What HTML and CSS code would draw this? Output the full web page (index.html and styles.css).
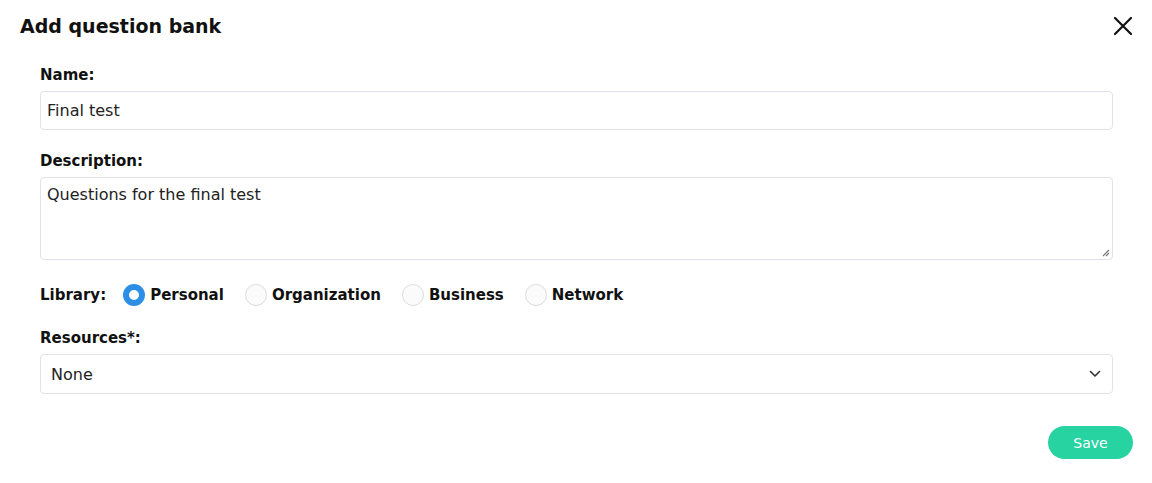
FILE: index.html
```html
<!DOCTYPE html>
<html lang="en">
<head>
<meta charset="utf-8">
<title>Add question bank</title>
<link rel="stylesheet" href="styles.css">
</head>
<body>
<div class="modal">
  <div class="modal-header">
    <h1 class="modal-title">Add question bank</h1>
    <button class="close-btn" aria-label="Close">
      <svg width="20" height="20" viewBox="0 0 20 20"><path d="M2 2 L18 18 M18 2 L2 18" stroke="#111" stroke-width="2.2" stroke-linecap="round" fill="none"/></svg>
    </button>
  </div>
  <form class="modal-body">
    <div class="field">
      <label class="label">Name:</label>
      <div class="input">Final test</div>
    </div>
    <div class="field">
      <label class="label">Description:</label>
      <div class="textarea">Questions for the final test
        <svg class="grip" width="9" height="9" viewBox="0 0 9 9"><path d="M8 2 L2 8 M8 5 L5 8" stroke="#777" stroke-width="1.2" fill="none"/></svg>
      </div>
    </div>
    <div class="library-row">
      <span class="label-inline">Library:</span>
      <span class="radio-opt"><span class="radio checked"></span>Personal</span>
      <span class="radio-opt"><span class="radio"></span>Organization</span>
      <span class="radio-opt"><span class="radio"></span>Business</span>
      <span class="radio-opt"><span class="radio"></span>Network</span>
    </div>
    <div class="field">
      <label class="label">Resources*:</label>
      <div class="select">None
        <svg class="chev" width="12" height="8" viewBox="0 0 12 8"><path d="M1.5 1.5 L6 6 L10.5 1.5" stroke="#333" stroke-width="1.6" fill="none" stroke-linecap="round" stroke-linejoin="round"/></svg>
      </div>
    </div>
  </form>
  <div class="modal-footer">
    <button class="save-btn">Save</button>
  </div>
</div>
</body>
</html>
```
FILE: styles.css
```css
* { box-sizing: border-box; }
html, body { margin: 0; padding: 0; background: #fff; }
body {
  font-family: "DejaVu Sans", "Open Sans", sans-serif;
  color: #222;
  width: 1152px;
  height: 483px;
  overflow: hidden;
}
.modal { width: 1152px; }
.modal-header {
  display: flex;
  justify-content: space-between;
  align-items: center;
  padding: 13px 19px 0 20px;
  height: 39px;
}
.modal-title {
  margin: 0;
  font-size: 19px;
  line-height: 26px;
  font-weight: 700;
  color: #111;
}
.close-btn {
  border: 0;
  background: none;
  padding: 0;
  width: 20px;
  height: 20px;
  display: flex;
  cursor: pointer;
}
.modal-body {
  padding: 26px 39px 0 40px;
  display: flex;
  flex-direction: column;
}
.field { display: flex; flex-direction: column; }
.field + .field { margin-top: 21px; }
.label, .label-inline {
  font-size: 15px;
  line-height: 20px;
  font-weight: 700;
  color: #111;
}
.label { margin-bottom: 6px; }
.input, .select, .textarea {
  border: 1px solid #e2e2ea;
  border-radius: 4px;
  font-size: 16px;
  color: #222;
  background: #fff;
}
.input {
  height: 39px;
  padding: 0 6px;
  display: flex;
  align-items: center;
}
.textarea {
  height: 83px;
  padding: 6px 6px;
  line-height: 22px;
  position: relative;
}
.grip { position: absolute; right: 2px; bottom: 2px; }
.library-row {
  display: flex;
  align-items: center;
  margin-top: 23px;
  margin-bottom: 21px;
  height: 24px;
  font-size: 15px;
  font-weight: 700;
  color: #111;
}
.label-inline { margin-right: 17px; }
.radio-opt {
  display: flex;
  align-items: center;
  gap: 5px;
  margin-right: 21px;
}
.radio {
  width: 22px;
  height: 22px;
  border-radius: 50%;
  border: 1px solid #dcdce2;
  background: #fbfbfb;
}
.radio.checked {
  border: 6px solid #2d8ee6;
  background: #fff;
}
.select {
  height: 40px;
  padding: 0 11px 0 10px;
  display: flex;
  align-items: center;
  justify-content: space-between;
}
.modal-footer {
  display: flex;
  justify-content: flex-end;
  padding: 32px 19px 0 0;
}
.save-btn {
  width: 85px;
  height: 33px;
  border: 0;
  border-radius: 17px;
  background: #27d3a1;
  color: #fff;
  font-family: "DejaVu Sans", "Open Sans", sans-serif;
  font-size: 14px;
  font-weight: 500;
  cursor: pointer;
}
```
